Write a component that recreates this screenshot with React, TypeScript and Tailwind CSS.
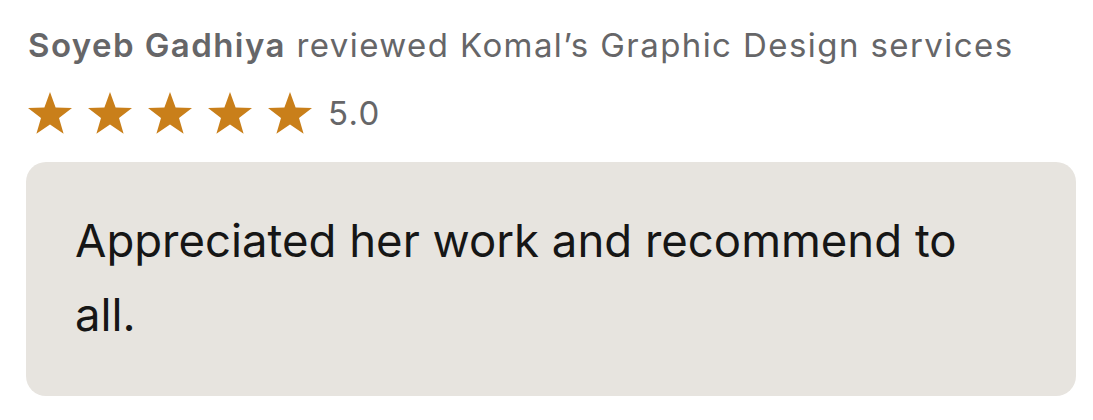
import React from "react";

const Star = () => (
  <svg viewBox="0 0 44 42" className="h-[42px] w-[44px]" aria-hidden="true">
    <path
      d="M22 0L27.6 15.4 44 16 31 26.1 35.6 41.8 22 32.6 8.4 41.8 13 26.1 0 16 16.4 15.4Z"
      fill="#c97f1a"
    />
  </svg>
);

export default function App() {
  return (
    <div className="min-h-screen bg-white pl-[26px] pr-[17px] pt-[25px] font-['Inter','Liberation_Sans',sans-serif]">
      <p className="pl-[2px] text-[33px] leading-[40px] tracking-[1.42px] text-[#666668]">
        <span className="font-semibold">Soyeb Gadhiya</span> reviewed Komal’s Graphic Design services
      </p>

      <div className="mt-[27px] flex items-center gap-4 pl-[2px]">
        {[0, 1, 2, 3, 4].map((i) => (
          <Star key={i} />
        ))}
        <span className="text-[33px] leading-[40px] tracking-[1.3px] text-[#666668]">5.0</span>
      </div>

      <div className="mt-[28px] rounded-[20px] bg-[#e7e4df] pb-[44px] pl-[49px] pr-[80px] pt-[42px]">
        <p className="text-[45.5px] leading-[74px] text-[#161616]">
          Appreciated her work and recommend to all.
        </p>
      </div>
    </div>
  );
}
